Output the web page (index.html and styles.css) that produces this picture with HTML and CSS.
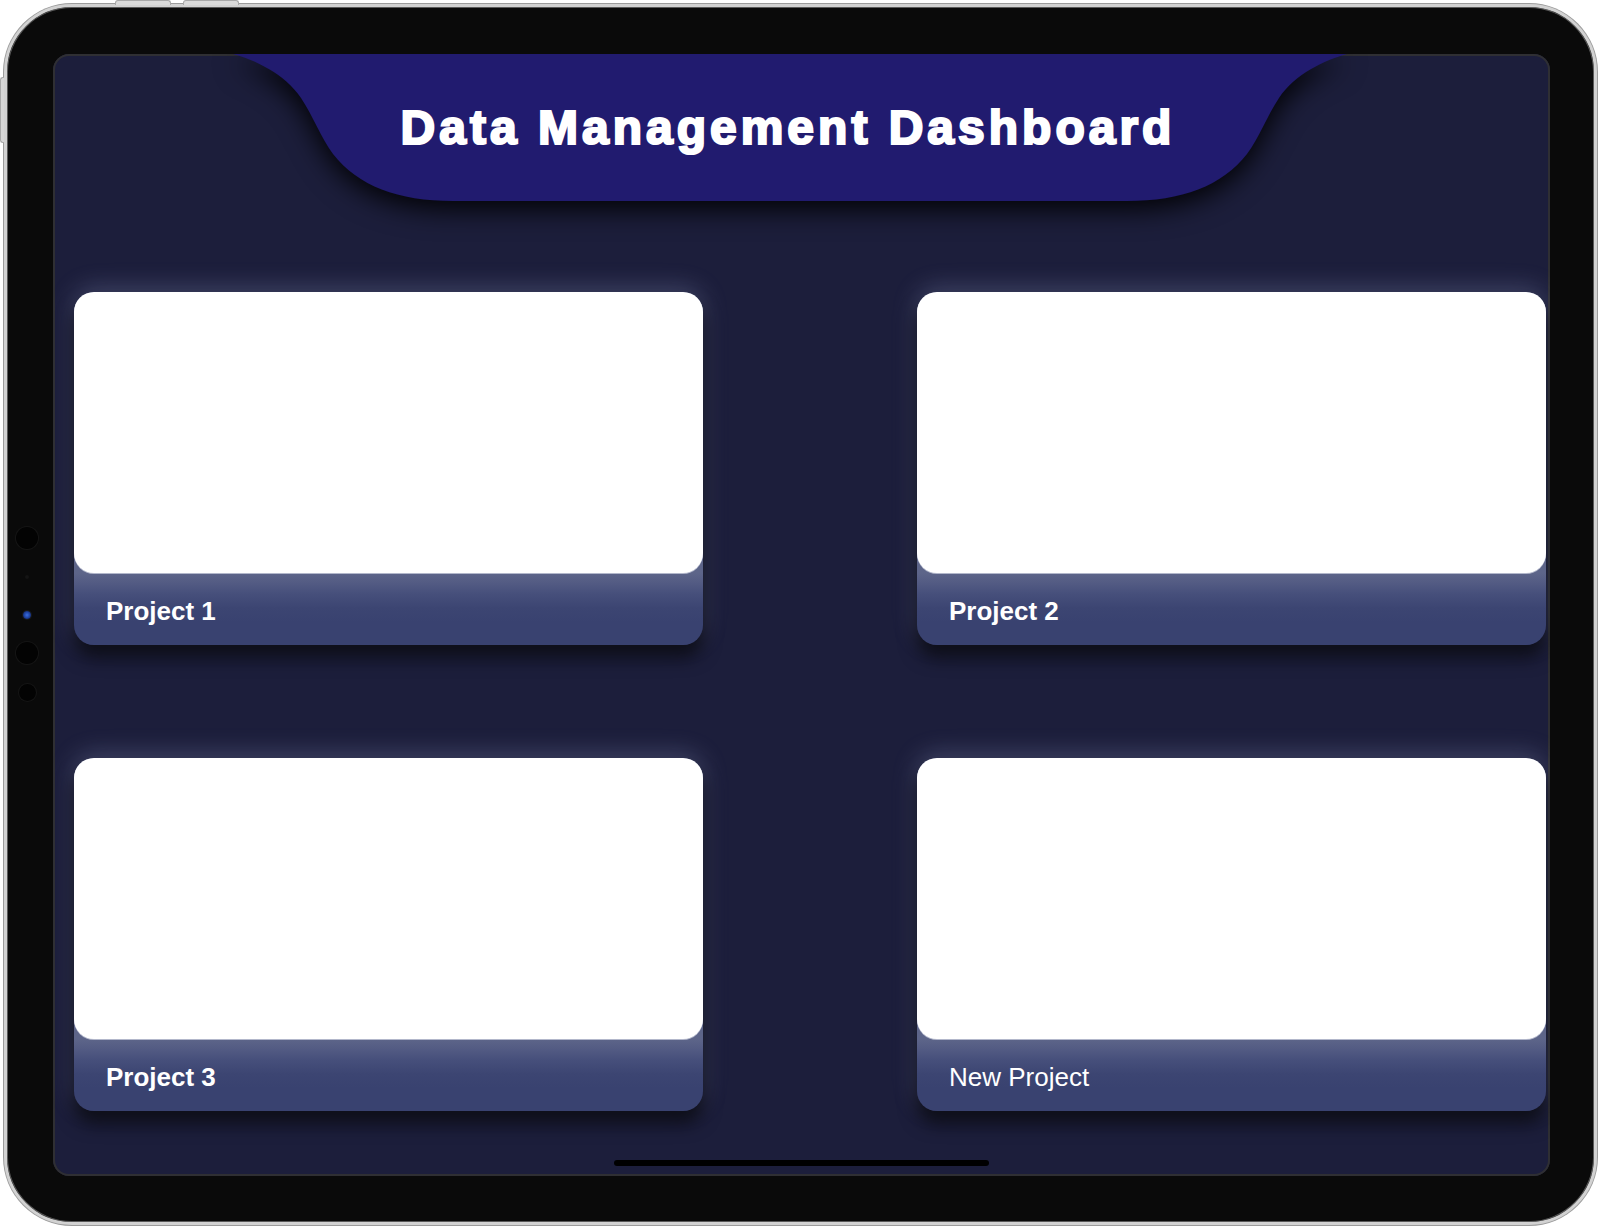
FILE: index.html
```html
<!DOCTYPE html>
<html lang="en">
<head>
<meta charset="utf-8">
<title>Data Management Dashboard</title>
<link rel="stylesheet" href="styles.css">
</head>
<body>
<div class="device">
  <span class="hw-btn hw-btn-a"></span>
  <span class="hw-btn hw-btn-b"></span>
  <span class="hw-side"></span>
  <span class="sensor sensor-1"></span>
  <span class="sensor sensor-2"></span>
  <span class="sensor sensor-3"></span>
  <span class="sensor sensor-4"></span>
  <span class="sensor sensor-5"></span>
  <div class="screen">
    <header class="topbar">
      <svg class="topbar-shape" viewBox="0 0 1114 147" width="1114" height="147" aria-hidden="true">
        <path d="M0,0 L1114,0 C1092,6 1062,20 1046,44 C1034,62 1026,84 1014,100 C989,132 949,147 894,147 L220,147 C165,147 125,132 100,100 C88,84 80,62 68,44 C52,20 22,6 0,0 Z" fill="#211b6f"/>
      </svg>
      <h1 class="title">Data Management Dashboard</h1>
    </header>
    <main class="projects">
      <div class="card">
        <div class="card-preview"></div>
        <div class="card-label">Project 1</div>
      </div>
      <div class="card">
        <div class="card-preview"></div>
        <div class="card-label">Project 2</div>
      </div>
      <div class="card">
        <div class="card-preview"></div>
        <div class="card-label">Project 3</div>
      </div>
      <div class="card">
        <div class="card-preview"></div>
        <div class="card-label card-label-new">New Project</div>
      </div>
    </main>
    <div class="home-indicator"></div>
  </div>
</div>
</body>
</html>
```

FILE: styles.css
```css
* {
  box-sizing: border-box;
}

html, body {
  margin: 0;
  padding: 0;
  background: #ffffff;
}

body {
  font-family: "Liberation Sans", Arial, sans-serif;
  width: 1600px;
  height: 1227px;
  overflow: hidden;
}

.device {
  position: relative;
  margin: 4px 0 0 4px;
  width: 1593px;
  height: 1221px;
  padding: 47px 44px 46px 46px;
  background: #0a0a0a;
  border: 3px solid #d2d2d2;
  border-radius: 68px;
  box-shadow: 0 0 0 1px #9c9c9c, inset 0 0 0 1px #5a5a5a;
}

.hw-btn {
  position: absolute;
  top: -7px;
  width: 56px;
  height: 5px;
  background: #dadada;
  border: 1px solid #a8a8a8;
  border-bottom: none;
  border-radius: 3px 3px 0 0;
}

.hw-btn-a { left: 108px; }
.hw-btn-b { left: 176px; }

.hw-side {
  position: absolute;
  left: -7px;
  top: 70px;
  width: 4px;
  height: 66px;
  background: #d6d6d6;
  border: 1px solid #a8a8a8;
  border-right: none;
  border-radius: 3px 0 0 3px;
}

.sensor {
  position: absolute;
  border-radius: 50%;
  background: #030303;
  box-shadow: 0 0 0 1px #151515;
}

.sensor-1 { left: 9px; top: 520px; width: 22px; height: 22px; }
.sensor-2 { left: 18px; top: 568px; width: 4px; height: 4px; background: #141414; box-shadow: none; }
.sensor-3 {
  left: 16px; top: 604px; width: 8px; height: 8px;
  background: radial-gradient(circle, #3a6ee0 0, #1d3f9a 55%, #0b1530 100%);
  box-shadow: 0 0 0 1px #1a1a1a;
}
.sensor-4 { left: 9px; top: 635px; width: 22px; height: 22px; }
.sensor-5 { left: 12px; top: 677px; width: 17px; height: 17px; }

.screen {
  position: relative;
  width: 100%;
  height: 100%;
  display: flex;
  flex-direction: column;
  background: #1c1e3b;
  border-radius: 16px;
  overflow: hidden;
  box-shadow: inset 0 0 0 2px #2f2f33;
}

.topbar {
  position: relative;
  flex-shrink: 0;
  width: 1114px;
  height: 147px;
  margin-left: 180px;
}

.topbar-shape {
  position: absolute;
  left: 0;
  top: 0;
  display: block;
  overflow: visible;
  filter: drop-shadow(0 8px 14px rgba(0, 0, 0, 0.95));
}

.title {
  position: relative;
  margin: 0;
  padding: 50px 4px 0 0;
  text-align: center;
  color: #ffffff;
  font-family: "Liberation Sans", Arial, sans-serif;
  font-weight: 700;
  font-size: 48px;
  line-height: 48px;
  letter-spacing: 4px;
  -webkit-text-stroke: 2.2px #ffffff;
  white-space: nowrap;
}

.projects {
  display: grid;
  grid-template-columns: 629px 629px;
  grid-auto-rows: 353px;
  column-gap: 214px;
  row-gap: 113px;
  margin-top: 91px;
  padding-left: 21px;
}

.card {
  display: flex;
  flex-direction: column;
  border-radius: 20px;
  background: linear-gradient(to bottom,
    #5d6589 0, #5d6589 281px,
    #545c84 290px, #464f7b 302px,
    #3c4572 316px, #394270 330px, #394270 100%);
  box-shadow:
    0 12px 18px rgba(0, 0, 0, 0.7),
    0 -4px 24px rgba(160, 168, 215, 0.3);
}

.card-preview {
  height: 281px;
  flex-shrink: 0;
  background: #ffffff;
  border-radius: 20px;
  box-shadow: 0 1px 0 rgba(200, 204, 220, 0.8);
}

.card-label {
  padding: 23px 32px 0;
  color: #ffffff;
  font-family: "Liberation Sans", Arial, sans-serif;
  font-weight: 700;
  font-size: 26px;
  line-height: 30px;
}

.card-label-new {
  font-weight: 400;
}

.home-indicator {
  flex-shrink: 0;
  align-self: center;
  width: 375px;
  height: 6px;
  margin: auto 0 10px;
  border-radius: 3px;
  background: #000000;
}
```
